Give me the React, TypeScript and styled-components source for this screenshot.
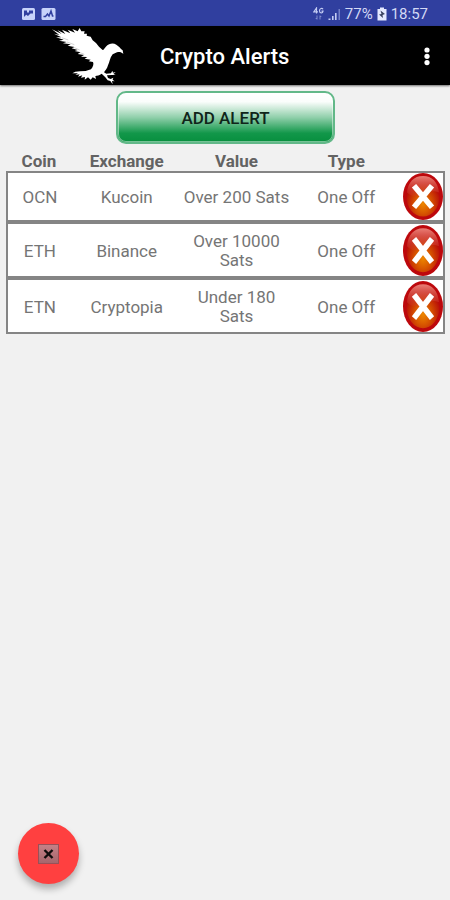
import React from "react";
import styled, { createGlobalStyle } from "styled-components";

const GlobalStyle = createGlobalStyle`
  *, *::before, *::after { box-sizing: border-box; }
  body {
    margin: 0;
    background: #f1f1f1;
    font-family: Roboto, "Liberation Sans", sans-serif;
  }
`;

const Page = styled.div`
  display: flex;
  flex-direction: column;
  min-height: 100vh;
`;

const StatusBar = styled.div`
  display: flex;
  align-items: center;
  justify-content: space-between;
  height: 26px;
  padding: 2px 22px 0 21px;
  background: #303f9f;
  color: #d3d9f5;
`;

const StatusGroup = styled.div<{ $gap: number }>`
  display: flex;
  align-items: center;
  gap: ${({ $gap }) => $gap}px;
`;

const StatusText = styled.span`
  font-size: 15px;
  line-height: 20px;
`;

const Header = styled.header`
  display: flex;
  align-items: center;
  height: 59px;
  padding: 0 7px 0 51px;
  background: #000;
  color: #fff;
  box-shadow: 0 1px 2px rgba(0, 0, 0, 0.55);
`;

const Title = styled.h1`
  flex: 1;
  margin: 0;
  padding: 2px 0 0 35px;
  font-size: 22px;
  line-height: 28px;
  font-weight: 500;
`;

const MenuButton = styled.button`
  display: flex;
  align-items: center;
  justify-content: center;
  width: 32px;
  height: 40px;
  padding: 0;
  border: 0;
  background: none;
  color: inherit;
`;

const Content = styled.main`
  display: flex;
  flex-direction: column;
  align-items: center;
  padding: 6px 5px 0 6px;
`;

const AddButton = styled.button`
  width: 50%;
  height: 53px;
  padding: 0;
  border: 2px solid #62b888;
  border-radius: 10px;
  background: linear-gradient(#fff 0%, #fafdfb 18%, #8fcfaa 50%, #12974a 82%, #078f3e 100%);
  box-shadow: inset 0 0 0 1px rgba(255, 255, 255, 0.45);
  color: #10251a;
  font: 500 17px/24px Roboto, "Liberation Sans", sans-serif;
`;

const Table = styled.table`
  width: 100%;
  margin-top: 6px;
  table-layout: fixed;
  border-collapse: separate;
  border-spacing: 0;
  color: #757575;
  font-size: 17px;
  line-height: 19px;
  text-align: center;
`;

const Column = styled.col<{ $share: number }>`
  width: ${({ $share }) => $share}%;
`;

const HeadCell = styled.th`
  height: 21px;
  padding: 1px 0 0;
  color: #636363;
  font-weight: 700;
`;

const Cell = styled.td`
  padding: 2px 0 0;
  border: solid #858585;
  border-width: 2px 0;
  background: #fff;

  &:first-child { border-left-width: 2px; }
`;

const ActionCell = styled(Cell)`
  padding: 0;
  border-right-width: 2px;
`;

const Row = styled.tr<{ $compact: boolean }>`
  ${Cell} { height: ${({ $compact }) => ($compact ? 51 : 56)}px; }
`;

const DeleteButton = styled.button<{ $compact: boolean }>`
  display: block;
  width: 40px;
  height: ${({ $compact }) => ($compact ? 47 : 51)}px;
  margin: 0 0 0 auto;
  padding: 0;
  border: 0;
  background: none;

  svg { display: block; width: 100%; height: 100%; }
`;

const Footer = styled.footer`
  margin-top: auto;
  padding: 0 18px 16px;
`;

const CloseButton = styled.button`
  display: flex;
  align-items: center;
  justify-content: center;
  width: 61px;
  height: 61px;
  padding: 0;
  border: 0;
  border-radius: 50%;
  background: #ff4040;
  box-shadow: 0 5px 7px rgba(0, 0, 0, 0.28);
`;

const alerts = [
  { coin: "OCN", exchange: "Kucoin", value: "Over 200 Sats", type: "One Off" },
  { coin: "ETH", exchange: "Binance", value: "Over 10000 Sats", type: "One Off" },
  { coin: "ETN", exchange: "Cryptopia", value: "Under 180 Sats", type: "One Off" },
];

const PictureIcon = () => (
  <svg width="15" height="13" viewBox="0 0 15 13" aria-hidden="true">
    <rect x="1" y="0" width="13" height="12" rx="1.5" fill="#c7d3fa" />
    <path d="M3 2.500V9l2.200-2.200L7 8l2.500-2.500H12v-3H8v2H6v-2z" fill="#303f9f" />
  </svg>
);

const ChartIcon = () => (
  <svg width="15" height="13" viewBox="0 0 15 13" aria-hidden="true">
    <rect x="0.500" y="0" width="14" height="12" rx="1.500" fill="#c7d3fa" />
    <path d="M2.500 8.500h2l2-2.500L8 8 10 3l1.500 5h1" fill="none" stroke="#303f9f" strokeWidth="1.500" />
  </svg>
);

const NetworkIcon = () => (
  <svg width="11" height="14" viewBox="0 0 11 14" fill="none" stroke="#c3ccf3" aria-hidden="true">
    <path d="M3.500 6.500V1L0.800 4.800H5M10 2.200C9.300 1 6.500 1 6.500 3.800S9.700 6.600 10 4.200H8.500" strokeWidth="1.200" />
    <path d="M4 8.500v3.500M2.800 11 4 12.500M7 12.500V9M8.200 10 7 8.500" strokeWidth="0.900" opacity="0.600" />
  </svg>
);

const SignalIcon = () => (
  <svg width="13" height="13" viewBox="0 0 13 13" aria-hidden="true">
    <path d="M0.500 10.500h2V12h-2zM4 8h1.600v4H4zM7 5h1.600v7H7z" fill="#c3ccf3" />
    <path d="M10.500 1h1.500v11h-1.500z" fill="#7280c9" />
  </svg>
);

const BatteryIcon = () => (
  <svg width="10" height="14" viewBox="0 0 10 14" aria-hidden="true">
    <path d="M3 0.500h4V2h2.500v11.500h-9V2H3z" fill="#e4e9ff" />
    <path d="M3.500 3.500 8 7 5.500 8l.5 3-4-3.500L4.500 7z" fill="#39415f" />
  </svg>
);

const BirdLogo = () => (
  <svg width="74" height="58" viewBox="18 18 222 174" role="img" aria-label="Bird logo">
    <path
      fill="#fff"
      d="M21 25 50 39 37 27 61 39 51 26 76 37 68 26 90 35 82 24 98 31 104 21
        109 31 119 31 117 38 126 38 125 44 137 47 143 58 153 66 162 77 172 86
        C177 89 178 81 184 76C192 67 205 65 214 71C221 75 226 82 233 88L235 99
        C227 91 221 93 216 94L203 100C194 111 194 123 189 133
        C186 144 180 149 177 154L184 158 198 157 202 149 204 155 212 153
        205 159 212 162 199 162 186 163 189 171 197 174 205 170 203 176
        209 181 201 180 203 190 196 180 188 178 181 169 170 158
        C164 163 156 164 151 165L153 174 143 169 137 176 129 169 119 176 120 168
        108 170 112 163 99 167 104 160 91 162 99 157 82 157 91 152 105 151
        122 150 138 145C144 137 147 130 144 123L131 121 137 116 119 113
        127 108 108 107 117 102 98 99 106 94 89 90 98 87 80 82 88 78
        68 74 77 70 54 67 65 63 42 59 56 56 33 49 49 49 27 38 43 42Z"
    />
    <path d="m50 50 20 7M66 63l22 8M84 78l20 9M100 93l18 7" fill="none" stroke="#000" strokeWidth="1.500" opacity="0.350" />
  </svg>
);

const DeleteIcon = ({ id }: { id: string }) => (
  <svg viewBox="0 0 40 48" preserveAspectRatio="none" aria-hidden="true">
    <defs>
      <radialGradient id={`${id}-fill`} cx="50%" cy="68%" r="55%">
        <stop offset="0" stopColor="#ed8700" />
        <stop offset="0.450" stopColor="#d75500" />
        <stop offset="1" stopColor="#b70b08" />
      </radialGradient>
      <linearGradient id={`${id}-shine`} x1="0" y1="0" x2="0" y2="1">
        <stop offset="0" stopColor="#ea8078" />
        <stop offset="1" stopColor="#d03a2a" stopOpacity="0.250" />
      </linearGradient>
    </defs>
    <ellipse cx="20" cy="24" rx="20" ry="24" fill="#bd080c" />
    <ellipse cx="20" cy="24" rx="16.500" ry="20.500" fill={`url(#${id}-fill)`} />
    <path d="M4 20C5 9 11 3 20 3s15 6 16 17C29 17 25 20 20 22 13 25 8 24 4 20z" fill={`url(#${id}-shine)`} />
    <path d="M11 13 29 35M29 13 11 35" fill="none" stroke="#fff" strokeWidth="5.500" />
  </svg>
);

export default function App() {
  return (
    <>
      <GlobalStyle />
      <Page>
        <StatusBar>
          <StatusGroup $gap={5}>
            <PictureIcon />
            <ChartIcon />
          </StatusGroup>
          <StatusGroup $gap={4}>
            <NetworkIcon />
            <SignalIcon />
            <StatusText>77%</StatusText>
            <BatteryIcon />
            <StatusText>18:57</StatusText>
          </StatusGroup>
        </StatusBar>
        <Header>
          <BirdLogo />
          <Title>Crypto Alerts</Title>
          <MenuButton type="button" aria-label="More options">
            <svg width="6" height="20" viewBox="0 0 6 20" fill="#fff" aria-hidden="true">
              <circle cx="3" cy="4" r="2.600" />
              <circle cx="3" cy="10.300" r="2.600" />
              <circle cx="3" cy="16.600" r="2.600" />
            </svg>
          </MenuButton>
        </Header>
        <Content>
          <AddButton type="button">ADD ALERT</AddButton>
          <Table>
            <colgroup>
              <Column $share={15} />
              <Column $share={25} />
              <Column $share={25} />
              <Column $share={25} />
              <Column $share={10} />
            </colgroup>
            <thead>
              <tr>
                <HeadCell scope="col">Coin</HeadCell>
                <HeadCell scope="col">Exchange</HeadCell>
                <HeadCell scope="col">Value</HeadCell>
                <HeadCell scope="col">Type</HeadCell>
                <HeadCell as="td" />
              </tr>
            </thead>
            <tbody>
              {alerts.map((alert, index) => {
                const compact = index === 0;
                return (
                  <Row key={alert.coin} $compact={compact}>
                    <Cell>{alert.coin}</Cell>
                    <Cell>{alert.exchange}</Cell>
                    <Cell>{alert.value}</Cell>
                    <Cell>{alert.type}</Cell>
                    <ActionCell>
                      <DeleteButton type="button" $compact={compact} aria-label={`Delete ${alert.coin} alert`}>
                        <DeleteIcon id={`delete-${alert.coin}`} />
                      </DeleteButton>
                    </ActionCell>
                  </Row>
                );
              })}
            </tbody>
          </Table>
        </Content>
        <Footer>
          <CloseButton type="button" aria-label="Close">
            <svg width="21" height="20" viewBox="0 0 21 20" aria-hidden="true">
              <defs>
                <linearGradient id="close-box" x1="0" y1="0" x2="0" y2="1">
                  <stop offset="0" stopColor="#c58187" />
                  <stop offset="1" stopColor="#a5666c" />
                </linearGradient>
              </defs>
              <rect x="0.500" y="0.500" width="20" height="19" fill="url(#close-box)" stroke="#985158" />
              <path d="m6.500 6 8 8M14.500 6l-8 8" fill="none" stroke="#100c0c" strokeWidth="2.400" />
            </svg>
          </CloseButton>
        </Footer>
      </Page>
    </>
  );
}
